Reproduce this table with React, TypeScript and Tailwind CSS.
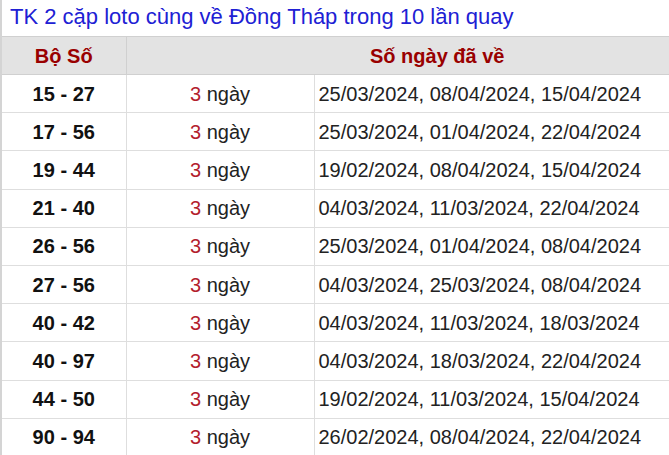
const rows = [
  { pair: '15 - 27', dates: '25/03/2024, 08/04/2024, 15/04/2024' },
  { pair: '17 - 56', dates: '25/03/2024, 01/04/2024, 22/04/2024' },
  { pair: '19 - 44', dates: '19/02/2024, 08/04/2024, 15/04/2024' },
  { pair: '21 - 40', dates: '04/03/2024, 11/03/2024, 22/04/2024' },
  { pair: '26 - 56', dates: '25/03/2024, 01/04/2024, 08/04/2024' },
  { pair: '27 - 56', dates: '04/03/2024, 25/03/2024, 08/04/2024' },
  { pair: '40 - 42', dates: '04/03/2024, 11/03/2024, 18/03/2024' },
  { pair: '40 - 97', dates: '04/03/2024, 18/03/2024, 22/04/2024' },
  { pair: '44 - 50', dates: '19/02/2024, 11/03/2024, 15/04/2024' },
  { pair: '90 - 94', dates: '26/02/2024, 08/04/2024, 22/04/2024' },
];

const App = () => {
  return (
    <div className="w-[669px] h-[455px] overflow-hidden bg-white font-['Liberation_Sans',Arial,sans-serif]">
      <div className="w-[748px] border-l-2 border-[#d4d4d4]">
        <h2 className="h-[36px] pl-2 pt-[4px] text-[22px] leading-[26px] text-[#2020d4]">
          TK 2 cặp loto cùng về Đồng Tháp trong 10 lần quay
        </h2>
        <table className="w-full border-collapse text-[20px]">
          <thead>
            <tr className="h-[38px] bg-[#e3e3e3] text-[#990000] font-bold">
              <th className="w-[124px] border-t border-b border-[#d0d0d0]">Bộ Số</th>
              <th colSpan={2} className="border border-[#d0d0d0] border-r-0">
                Số ngày đã về
              </th>
            </tr>
          </thead>
          <tbody>
            {rows.map((row, index) => (
              <tr key={index} className="h-[38.2px]">
                <td className="w-[124px] border-b border-[#dedede] text-center font-bold text-[#111]">
                  {row.pair}
                </td>
                <td className="w-[188px] border-b border-x border-[#dedede] text-center text-[#222]">
                  <span className="text-[#b3202c]">3</span> ngày
                </td>
                <td className="border-b border-[#dedede] pl-[4px] text-left text-[#222]">
                  {row.dates}
                </td>
              </tr>
            ))}
          </tbody>
        </table>
      </div>
    </div>
  );
};

export default App;
